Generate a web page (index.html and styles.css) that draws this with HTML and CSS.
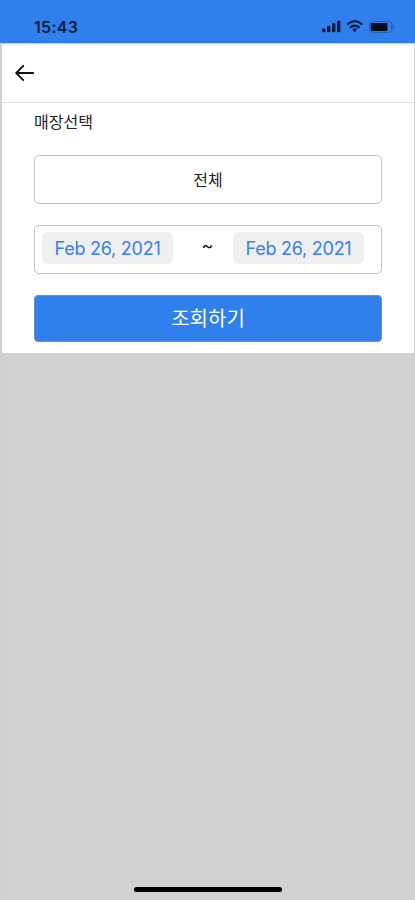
FILE: index.html
```html
<!DOCTYPE html>
<html lang="ko">
<head>
<meta charset="utf-8">
<meta name="viewport" content="width=device-width, initial-scale=1">
<title>매장선택</title>
<link rel="stylesheet" href="styles.css">
</head>
<body>
<div class="app">
  <header class="status">
    <span class="time">15:43</span>
    <svg class="status-icons" width="76" height="16" viewBox="0 0 76 16">
      <g fill="#071c3c">
        <rect x="1" y="9.5" width="3.4" height="3.8" rx=".8"/>
        <rect x="6" y="7" width="3.4" height="6.3" rx=".8"/>
        <rect x="11" y="4.3" width="3.4" height="9" rx=".8"/>
        <rect x="16" y="1.8" width="3.4" height="11.5" rx=".8"/>
        <path d="M31.4 10.1q2.4-1.9 4.8 0l-2.4 3.4z"/>
      </g>
      <path d="M26.2 5.5q7.6-6.6 15.2 0M29 8.6q4.8-3.9 9.6 0" fill="none" stroke="#071c3c" stroke-width="2.2"/>
      <rect x="48.6" y="2.5" width="22" height="11" rx="2.8" fill="none" stroke="#2261b6"/>
      <path d="M71.6 5.2q4 2.8 0 5.6z" fill="#2261b6"/>
      <rect x="49.8" y="4" width="16.7" height="8" rx="1" fill="#020b18"/>
    </svg>
  </header>
  <main class="screen">
    <nav class="nav">
      <svg width="20" height="18" viewBox="0 0 20 18" fill="none" stroke="#111" stroke-width="1.8" stroke-linecap="round" stroke-linejoin="round">
        <path d="M18.2 9H1.5M8.3 1.8L1.2 9l7.1 7.1"/>
      </svg>
    </nav>
    <section class="form">
      <div class="label">매장선택</div>
      <div class="field store">전체</div>
      <div class="field dates">
        <span class="date">Feb 26, 2021</span>
        <span class="tilde">~</span>
        <span class="date">Feb 26, 2021</span>
      </div>
      <div class="submit">조회하기</div>
    </section>
    <section class="results"><div class="home"></div></section>
  </main>
</div>
</body>
</html>
```
FILE: styles.css
```css
* { box-sizing: border-box; }
body { margin: 0; font-family: Inter, "Noto Sans CJK KR", sans-serif; color: #222; }
.app { height: 900px; display: flex; flex-direction: column; overflow: hidden; background: #fff; }
.status { height: 43px; flex: none; background: #2f80ed; display: flex; justify-content: space-between; padding: 18px 18px 0 34px; }
.time { font-size: 16px; line-height: 19px; font-weight: 600; letter-spacing: 0.3px; color: #071c3c; }
.status-icons { margin-top: 1px; }
.screen { flex: 1; display: flex; flex-direction: column; border: solid #d0d0d0; border-width: 1px 1px 1px 2px; }
.nav { height: 59px; flex: none; border-bottom: 1px solid #e2e2e2; padding: 20px 0 0 13px; }
.nav svg { display: block; }
.form { height: 250px; flex: none; padding: 7px 32px 0; }
.label { height: 24px; line-height: 24px; font-size: 16px; }
.field { height: 49px; border: 1px solid #c4c4c4; border-radius: 5px; }
.store { margin-top: 21px; text-align: center; font-size: 16px; line-height: 49px; }
.dates { margin-top: 21px; padding: 6px 17px 0 7px; display: flex; justify-content: space-between; }
.date { width: 131px; height: 32px; border-radius: 6px; background: #efefef; color: #3880ee; font-size: 18px; letter-spacing: -0.25px; line-height: 33px; text-align: center; }
.tilde { font-size: 18px; line-height: 27px; padding-left: 9px; color: #111; }
.submit { margin-top: 21px; height: 47px; border: 1px solid #6590ce; border-radius: 4px; background: #2f80ed; color: #fff; text-align: center; font-size: 20px; line-height: 47px; }
.results { flex: 1; background: #d2d2d2; display: flex; flex-direction: column; justify-content: flex-end; align-items: center; padding-bottom: 7px; }
.home { width: 148px; height: 5px; border-radius: 3px; background: #000; }
```
